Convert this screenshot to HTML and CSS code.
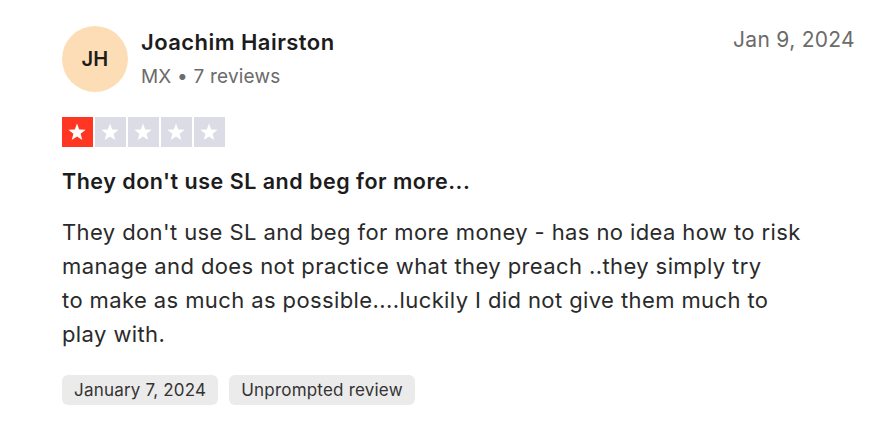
FILE: index.html
```html
<!DOCTYPE html>
<html lang="en">
<head>
  <meta charset="UTF-8" />
  <meta name="viewport" content="width=device-width, initial-scale=1.0"/>
  <title>Review</title>
  <link rel="stylesheet" href="styles.css">
</head>
<body>
  <div class="review">
    <div class="header">
      <div class="avatar">JH</div>
      <div class="user">
        <div class="name">Joachim Hairston</div>
        <div class="meta">MX • 7 reviews</div>
      </div>
      <div class="date">Jan 9, 2024</div>
    </div>

    <div class="stars">
      <span class="star on"><svg viewBox="0 0 30 30"><polygon points="15,6.5 17.2,12.6 23.6,12.8 18.6,16.8 20.3,23 15,19.4 9.7,23 11.4,16.8 6.4,12.8 12.8,12.6"/></svg></span>
      <span class="star"><svg viewBox="0 0 30 30"><polygon points="15,6.5 17.2,12.6 23.6,12.8 18.6,16.8 20.3,23 15,19.4 9.7,23 11.4,16.8 6.4,12.8 12.8,12.6"/></svg></span>
      <span class="star"><svg viewBox="0 0 30 30"><polygon points="15,6.5 17.2,12.6 23.6,12.8 18.6,16.8 20.3,23 15,19.4 9.7,23 11.4,16.8 6.4,12.8 12.8,12.6"/></svg></span>
      <span class="star"><svg viewBox="0 0 30 30"><polygon points="15,6.5 17.2,12.6 23.6,12.8 18.6,16.8 20.3,23 15,19.4 9.7,23 11.4,16.8 6.4,12.8 12.8,12.6"/></svg></span>
      <span class="star"><svg viewBox="0 0 30 30"><polygon points="15,6.5 17.2,12.6 23.6,12.8 18.6,16.8 20.3,23 15,19.4 9.7,23 11.4,16.8 6.4,12.8 12.8,12.6"/></svg></span>
    </div>

    <h2 class="title">They don't use SL and beg for more...</h2>
    <p class="text">They don't use SL and beg for more money - has no idea how to risk<br>
      manage and does not practice what they preach ..they simply try<br>
      to make as much as possible....luckily I did not give them much to<br>
      play with.</p>

    <div class="tags">
      <span class="tag">January 7, 2024</span>
      <span class="tag">Unprompted review</span>
    </div>
  </div>
</body>
</html>
```

FILE: styles.css
```css
body {
  margin: 0;
  background: #fff;
  font-family: Inter, "Noto Sans", sans-serif;
  color: #1c1c1c;
}

.review {
  padding: 26px 14px 0 62px;
}

.header {
  display: flex;
  align-items: flex-start;
}

.avatar {
  width: 66px;
  height: 66px;
  border-radius: 50%;
  background: #fdddb6;
  color: #1c1c1c;
  font-size: 20px;
  font-weight: 600;
  letter-spacing: 0.3px;
  display: flex;
  align-items: center;
  justify-content: center;
  flex-shrink: 0;
}

.user {
  margin-left: 13px;
  flex: 1;
  padding-top: 2px;
}

.name {
  font-size: 22px;
  font-weight: 600;
  letter-spacing: 0.45px;
  line-height: 28px;
}

.meta {
  font-size: 19px;
  letter-spacing: 0.2px;
  color: #6b6b6b;
  line-height: 28px;
  margin-top: 7px;
}

.date {
  font-size: 21px;
  letter-spacing: 0.3px;
  color: #6b6b6b;
  padding-top: 2px;
  line-height: 24px;
}

.stars {
  display: flex;
  gap: 2px;
  margin-top: 25px;
}

.star {
  width: 31px;
  height: 30px;
  background: #dcdce6;
}

.star svg {
  display: block;
  width: 30px;
  height: 30px;
  fill: #fff;
}

.star.on {
  background: #ff3722;
}

.title {
  font-size: 21.5px;
  font-weight: 600;
  letter-spacing: 0.5px;
  margin: 20px 0 0;
  line-height: 28px;
}

.text {
  font-size: 22px;
  letter-spacing: 0.4px;
  line-height: 34px;
  margin: 20px 0 0;
  color: #2a2a2a;
}

.tags {
  display: flex;
  gap: 11px;
  margin-top: 24px;
}

.tag {
  background: #ebebeb;
  border-radius: 6px;
  padding: 0 12px;
  height: 30px;
  line-height: 30px;
  font-size: 17px;
  letter-spacing: 0.2px;
  color: #333;
}
```
